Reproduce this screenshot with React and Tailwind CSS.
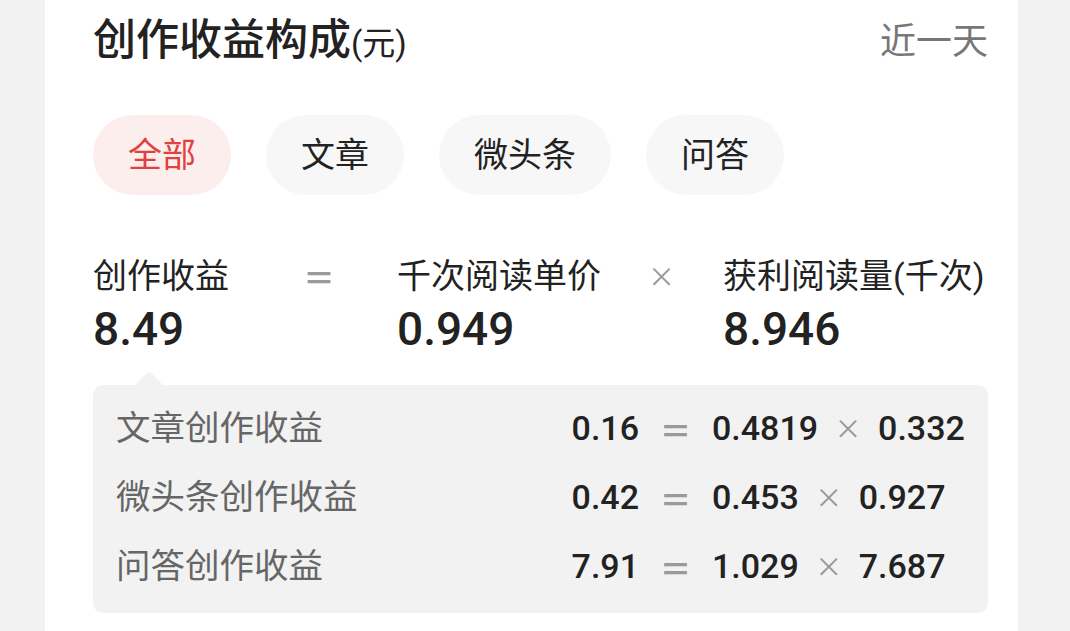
import { useState } from 'react'

const tabs = ['全部', '文章', '微头条', '问答']

const rows = [
  { label: '文章创作收益', total: '0.16', price: '0.4819', reads: '0.332' },
  { label: '微头条创作收益', total: '0.42', price: '0.453', reads: '0.927' },
  { label: '问答创作收益', total: '7.91', price: '1.029', reads: '7.687' },
]

const cjk = { fontFamily: '"Noto Sans CJK SC", sans-serif' }

const App = () => {
  const [active, setActive] = useState(0)

  return (
    <div
      className="w-full h-[631px] bg-[#f2f2f2] overflow-hidden"
      style={{ fontFamily: 'Roboto, "Noto Sans CJK SC", "Noto Sans", sans-serif' }}
    >
      <div className="ml-[45px] w-[973px] h-full bg-white pl-[48px] pr-[30px]">
        {/* header */}
        <div className="flex items-center justify-between pt-[17px] h-[67px]">
          <div className="text-[43px] leading-[50px] font-medium text-[#222]">
            创作收益构成<span className="text-[33px] font-normal">(元)</span>
          </div>
          <div className="text-[36px] leading-[50px] text-[#777]">近一天</div>
        </div>

        {/* tabs */}
        <div className="flex gap-[35px] mt-[48px]">
          {tabs.map((t, i) => (
            <button
              key={t}
              onClick={() => setActive(i)}
              className={`h-[80px] px-[35px] rounded-full text-[34px] ${
                i === active ? 'bg-[#fdeeee] text-[#e2403c]' : 'bg-[#f7f7f7] text-[#222]'
              }`}
            >
              {t}
            </button>
          ))}
        </div>

        {/* formula */}
        <div className="grid grid-cols-[210px_94px_251px_75px_1fr] mt-[61px] text-[#222]">
          <div>
            <div className="text-[34px] leading-[40px]">创作收益</div>
            <div className="text-[46px] leading-[52px] font-medium mt-[7px]">8.49</div>
          </div>
          <div className="text-[32px] leading-[40px] font-bold text-[#9a9a9a]" style={cjk}>＝</div>
          <div>
            <div className="text-[34px] leading-[40px] whitespace-nowrap">千次阅读单价</div>
            <div className="text-[46px] leading-[52px] font-medium mt-[7px]">0.949</div>
          </div>
          <div className="text-[27px] leading-[40px] text-[#999]" style={cjk}>×</div>
          <div>
            <div className="text-[34px] leading-[40px] whitespace-nowrap">获利阅读量(千次)</div>
            <div className="text-[46px] leading-[52px] font-medium mt-[7px]">8.946</div>
          </div>
        </div>

        {/* breakdown */}
        <div className="relative mt-[30px] bg-[#f2f2f2] rounded-[10px] pl-[23px] pt-[9px] pb-[12px]">
          <div className="absolute -top-[10px] left-[46px] w-[20px] h-[20px] rotate-45 rounded-[3px] bg-[#f2f2f2]" />
          {rows.map((r) => (
            <div key={r.label} className="relative flex items-center h-[69px]">
              <span className="w-[430px] text-[34.5px] text-[#666]">{r.label}</span>
              <span className="w-[93px] text-right text-[34px] font-medium text-[#222]">{r.total}</span>
              <span className="w-[73px] text-center text-[32px] font-bold text-[#9a9a9a]" style={cjk}>＝</span>
              <span className="text-[34px] font-medium text-[#222]">{r.price}</span>
              <span className="w-[60px] text-center text-[27px] text-[#999]" style={cjk}>×</span>
              <span className="text-[34px] font-medium text-[#222]">{r.reads}</span>
            </div>
          ))}
        </div>
      </div>
    </div>
  )
}

export default App
